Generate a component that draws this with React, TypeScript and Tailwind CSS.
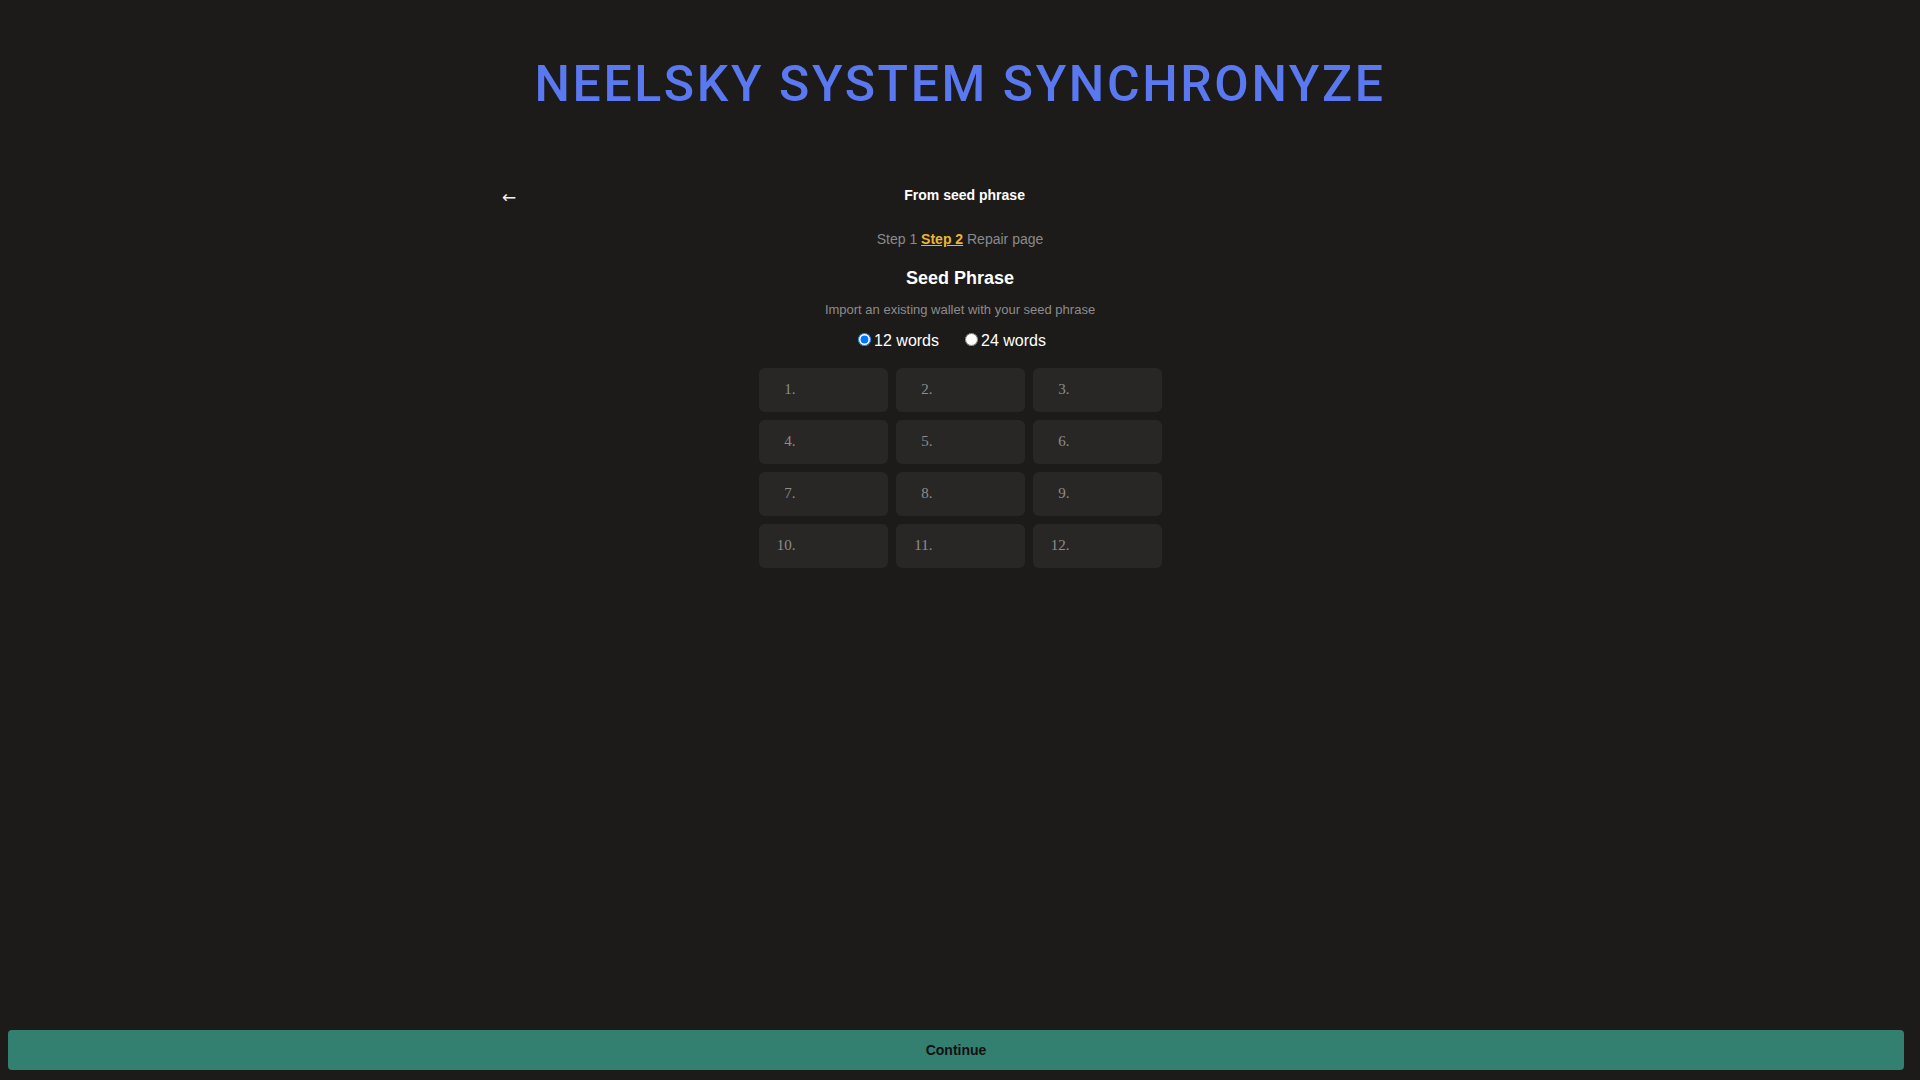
export default function App() {
  const nums = Array.from({ length: 12 }, (_, i) => i + 1);
  return (
    <div className="h-screen flex flex-col bg-[#1c1b1a] font-['Liberation_Sans',Arial,sans-serif] overflow-hidden">
      <h1 className="pt-[47px] text-center font-['Roboto',sans-serif] text-[50px] leading-[75px] font-medium tracking-[2.6px] text-[#5a78f0]">
        NEELSKY SYSTEM SYNCHRONYZE
      </h1>
      <div className="mt-[63px] mx-auto w-[916px] flex items-center h-[21px]">
        <span className="relative top-[2px] font-['DejaVu_Sans',sans-serif] text-[17px] leading-none text-[#f0f0f0]">←</span>
        <div className="flex-1 pr-[5px] text-center text-[14px] leading-[21px] font-bold text-white">From seed phrase</div>
      </div>
      <div className="mt-[23px] text-center text-[14px] leading-[21px] text-[#8a8a8a]">
        Step 1 <span className="font-bold text-[#eab631] underline">Step 2</span> Repair page
      </div>
      <h2 className="mt-[15px] text-center text-[18px] leading-[27px] font-bold text-white">Seed Phrase</h2>
      <p className="mt-[8px] text-center text-[13px] leading-[19.5px] text-[#8c8c8c]">
        Import an existing wallet with your seed phrase
      </p>
      <div className="mt-[9px] flex justify-center gap-[26px] pr-4 text-[16px] leading-[24px] text-white">
        <label className="flex items-center">
          <input type="radio" name="words" defaultChecked className="relative -top-[1px] m-0 mr-[3px] w-[13px] h-[13px]" />
          12 words
        </label>
        <label className="flex items-center">
          <input type="radio" name="words" className="relative -top-[1px] m-0 mr-[3px] w-[13px] h-[13px]" />
          24 words
        </label>
      </div>
      <div className="mt-[15px] mx-auto grid grid-cols-[repeat(3,129px)] gap-2">
        {nums.map((n) => (
          <div key={n} className="h-[44px] rounded-md bg-[#292726] flex items-center">
            <span className="w-[37px] text-right font-['Liberation_Serif',serif] text-[15px] text-[#8c8c8c]">{n}.</span>
          </div>
        ))}
      </div>
      <button className="mt-auto mb-[10px] ml-2 mr-4 h-[40px] shrink-0 rounded bg-[#337f70] text-[14px] font-bold text-[#111111]">
        Continue
      </button>
    </div>
  );
}
